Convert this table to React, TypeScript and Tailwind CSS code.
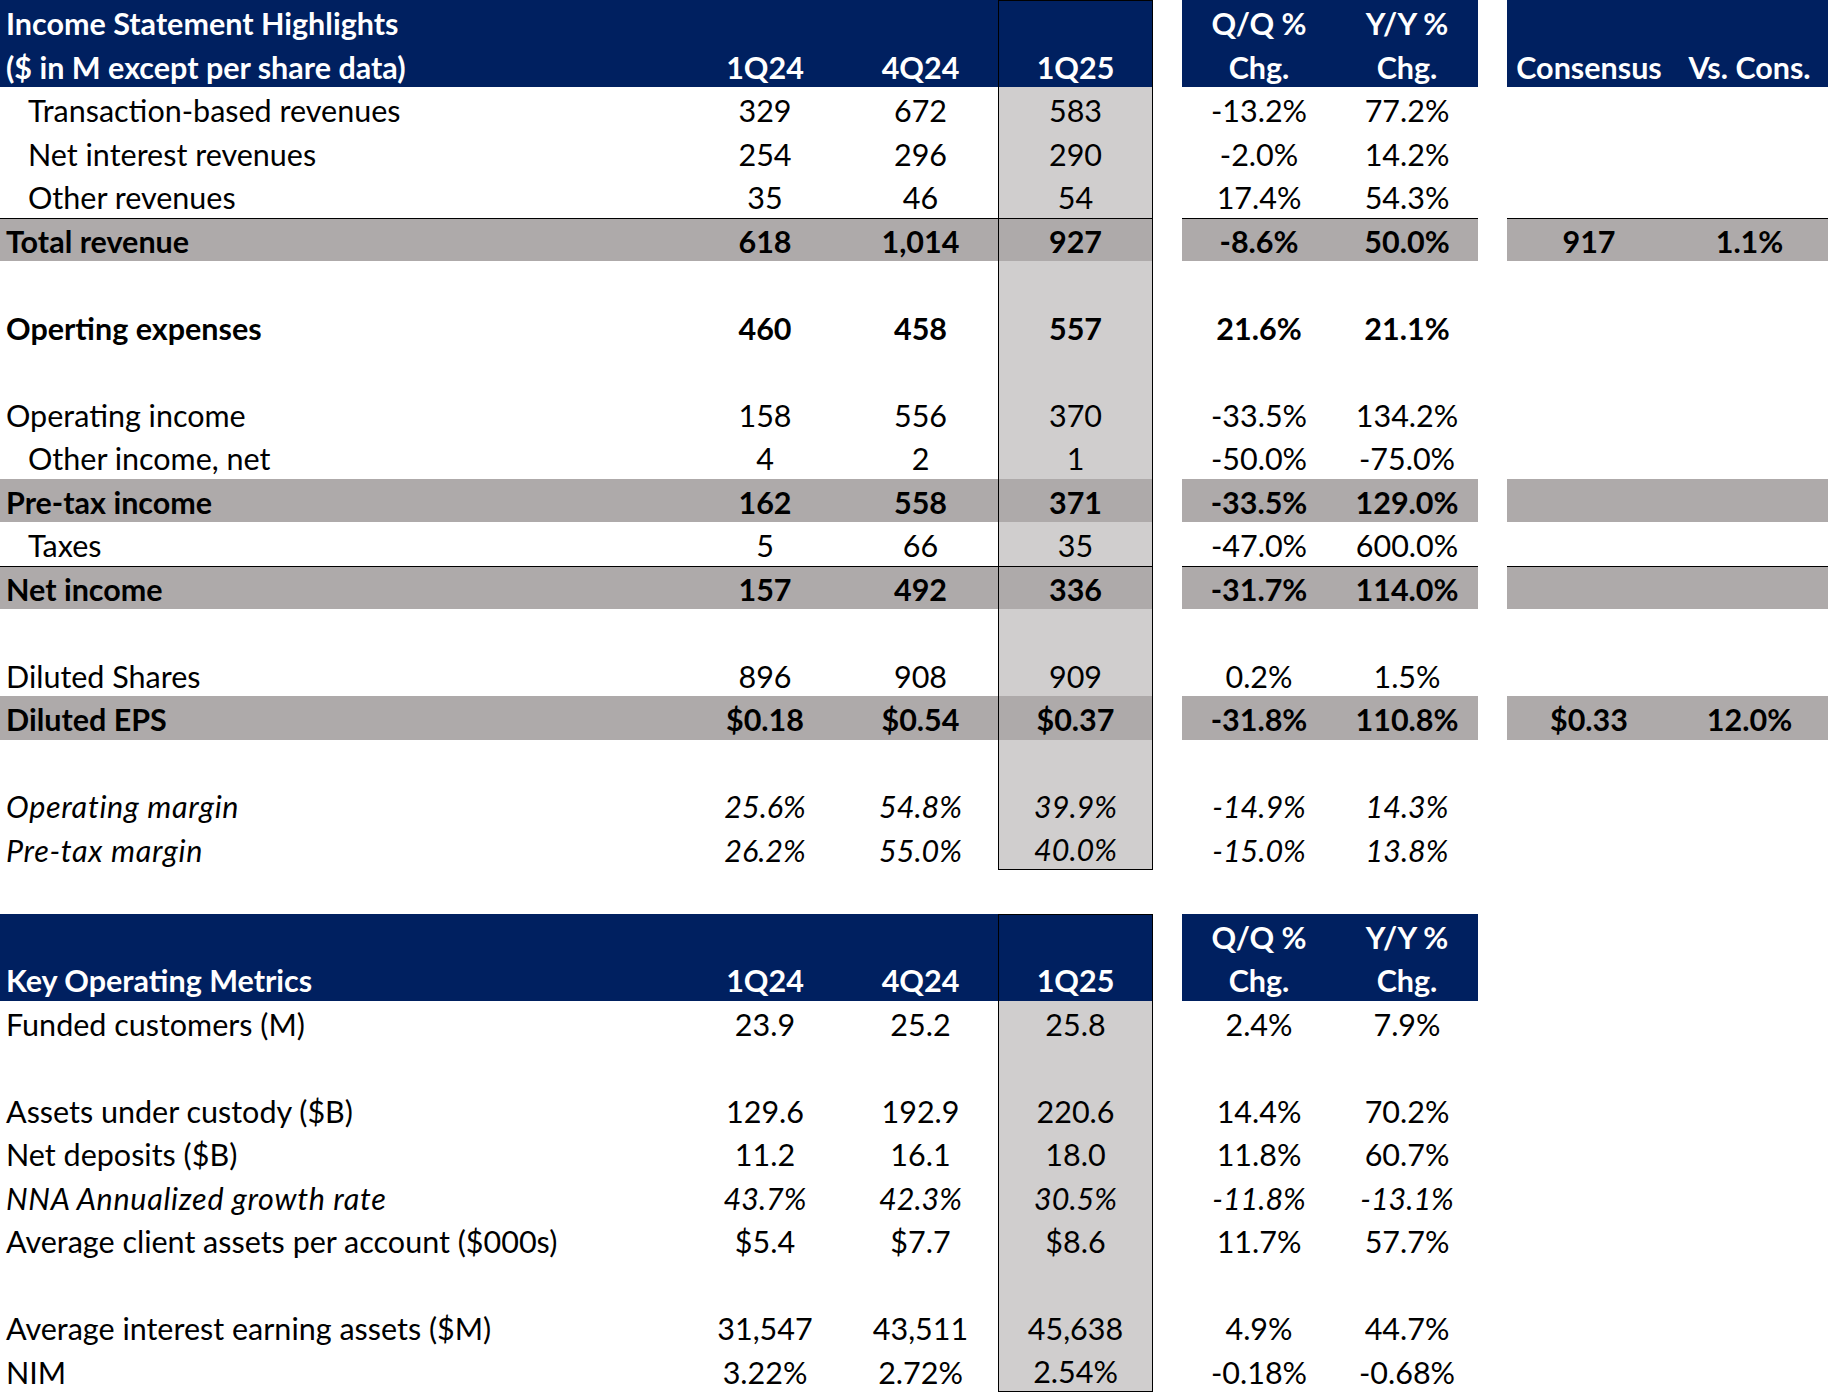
import React from 'react';

// column widths of the sheet: label | 1Q24 | 4Q24 | 1Q25 | gap | Q/Q | Y/Y | gap | Consensus | Vs. Cons.
const gridCols =
  'grid grid-cols-[687px_156px_155px_155px_29px_154px_142px_29px_164px_157px]';

type Row = {
  label?: string;
  vals?: string[];
  cons?: string[];
  indent?: boolean;
  bold?: boolean;
  italic?: boolean;
  gray?: boolean;
  line?: boolean;
  last?: boolean;
};

const incomeRows: Row[] = [
  { label: 'Transaction-based revenues', indent: true, vals: ['329', '672', '583', '-13.2%', '77.2%'] },
  { label: 'Net interest revenues', indent: true, vals: ['254', '296', '290', '-2.0%', '14.2%'] },
  { label: 'Other revenues', indent: true, vals: ['35', '46', '54', '17.4%', '54.3%'] },
  {
    label: 'Total revenue',
    bold: true,
    gray: true,
    line: true,
    vals: ['618', '1,014', '927', '-8.6%', '50.0%'],
    cons: ['917', '1.1%'],
  },
  {},
  { label: 'Operting expenses', bold: true, vals: ['460', '458', '557', '21.6%', '21.1%'] },
  {},
  { label: 'Operating income', vals: ['158', '556', '370', '-33.5%', '134.2%'] },
  { label: 'Other income, net', indent: true, vals: ['4', '2', '1', '-50.0%', '-75.0%'] },
  {
    label: 'Pre-tax income',
    bold: true,
    gray: true,
    vals: ['162', '558', '371', '-33.5%', '129.0%'],
    cons: ['', ''],
  },
  { label: 'Taxes', indent: true, vals: ['5', '66', '35', '-47.0%', '600.0%'] },
  {
    label: 'Net income',
    bold: true,
    gray: true,
    line: true,
    vals: ['157', '492', '336', '-31.7%', '114.0%'],
    cons: ['', ''],
  },
  {},
  { label: 'Diluted Shares', vals: ['896', '908', '909', '0.2%', '1.5%'] },
  {
    label: 'Diluted EPS',
    bold: true,
    gray: true,
    vals: ['$0.18', '$0.54', '$0.37', '-31.8%', '110.8%'],
    cons: ['$0.33', '12.0%'],
  },
  {},
  { label: 'Operating margin', italic: true, vals: ['25.6%', '54.8%', '39.9%', '-14.9%', '14.3%'] },
  { label: 'Pre-tax margin', italic: true, last: true, vals: ['26.2%', '55.0%', '40.0%', '-15.0%', '13.8%'] },
];

const metricRows: Row[] = [
  { label: 'Funded customers (M)', vals: ['23.9', '25.2', '25.8', '2.4%', '7.9%'] },
  {},
  { label: 'Assets under custody ($B)', vals: ['129.6', '192.9', '220.6', '14.4%', '70.2%'] },
  { label: 'Net deposits ($B)', vals: ['11.2', '16.1', '18.0', '11.8%', '60.7%'] },
  { label: 'NNA Annualized growth rate', italic: true, vals: ['43.7%', '42.3%', '30.5%', '-11.8%', '-13.1%'] },
  { label: 'Average client assets per account ($000s)', vals: ['$5.4', '$7.7', '$8.6', '11.7%', '57.7%'] },
  {},
  { label: 'Average interest earning assets ($M)', vals: ['31,547', '43,511', '45,638', '4.9%', '44.7%'] },
  { label: 'NIM', last: true, vals: ['3.22%', '2.72%', '2.54%', '-0.18%', '-0.68%'] },
];

const cell = 'h-[43.5px] flex items-end leading-none pb-[5px] whitespace-nowrap';
const num = `${cell} justify-center`;
const navy = 'bg-[#002060] text-white font-bold';

const DataRow = ({ row }: { row: Row }) => {
  const bg = row.gray ? 'bg-[#aeaaaa]' : '';
  const line = row.line ? 'border-t border-black' : '';
  const style = `${row.bold ? 'font-bold' : ''} ${row.italic ? 'italic' : ''}`;
  const v = row.vals ?? ['', '', '', '', ''];
  return (
    <div className={`${gridCols} ${style}`}>
      <div
        className={`${cell} ${bg} ${line} ${row.indent ? 'pl-[28px]' : 'pl-[6px]'} ${
          row.italic ? 'tracking-[0.7px]' : ''
        }`}
      >
        {row.label}
      </div>
      <div className={`${num} ${bg} ${line}`}>{v[0]}</div>
      <div className={`${num} ${bg} ${line}`}>{v[1]}</div>
      <div
        className={`${num} ${line} border-x border-black ${row.gray ? 'bg-[#aeaaaa]' : 'bg-[#d0cece]'} ${
          row.last ? 'border-b' : ''
        }`}
      >
        {v[2]}
      </div>
      <div />
      <div className={`${num} ${bg} ${line}`}>{v[3]}</div>
      <div className={`${num} ${bg} ${line}`}>{v[4]}</div>
      <div />
      {row.cons ? (
        <>
          <div className={`${num} ${bg} ${line}`}>{row.cons[0]}</div>
          <div className={`${num} ${bg} ${line}`}>{row.cons[1]}</div>
        </>
      ) : (
        <>
          <div />
          <div />
        </>
      )}
    </div>
  );
};

const IncomeHeader = () => (
  <>
    <div className={gridCols}>
      <div className={`${cell} ${navy} pl-[6px]`}>Income Statement Highlights</div>
      <div className={`${cell} ${navy}`} />
      <div className={`${cell} ${navy}`} />
      <div className={`${cell} ${navy} border-x border-t border-black`} />
      <div />
      <div className={`${num} ${navy}`}>Q/Q %</div>
      <div className={`${num} ${navy}`}>Y/Y %</div>
      <div />
      <div className={`${cell} ${navy}`} />
      <div className={`${cell} ${navy}`} />
    </div>
    <div className={gridCols}>
      <div className={`${cell} ${navy} pl-[6px]`}>($ in M except per share data)</div>
      <div className={`${num} ${navy}`}>1Q24</div>
      <div className={`${num} ${navy}`}>4Q24</div>
      <div className={`${num} ${navy} border-x border-black`}>1Q25</div>
      <div />
      <div className={`${num} ${navy}`}>Chg.</div>
      <div className={`${num} ${navy}`}>Chg.</div>
      <div />
      <div className={`${num} ${navy}`}>Consensus</div>
      <div className={`${num} ${navy}`}>Vs. Cons.</div>
    </div>
  </>
);

const MetricsHeader = () => (
  <>
    <div className={gridCols}>
      <div className={`${cell} ${navy}`} />
      <div className={`${cell} ${navy}`} />
      <div className={`${cell} ${navy}`} />
      <div className={`${cell} ${navy} border-x border-t border-black`} />
      <div />
      <div className={`${num} ${navy}`}>Q/Q %</div>
      <div className={`${num} ${navy}`}>Y/Y %</div>
    </div>
    <div className={gridCols}>
      <div className={`${cell} ${navy} pl-[6px]`}>Key Operating Metrics</div>
      <div className={`${num} ${navy}`}>1Q24</div>
      <div className={`${num} ${navy}`}>4Q24</div>
      <div className={`${num} ${navy} border-x border-black`}>1Q25</div>
      <div />
      <div className={`${num} ${navy}`}>Chg.</div>
      <div className={`${num} ${navy}`}>Chg.</div>
    </div>
  </>
);

export default function App() {
  return (
    <div className="w-[1828px] h-[1392px] overflow-hidden bg-white text-black text-[30.5px] font-['Lato',sans-serif]">
      <IncomeHeader />
      {incomeRows.map((row, i) => (
        <DataRow key={i} row={row} />
      ))}
      <div className="h-[43.5px]" />
      <MetricsHeader />
      {metricRows.map((row, i) => (
        <DataRow key={i} row={row} />
      ))}
    </div>
  );
}
